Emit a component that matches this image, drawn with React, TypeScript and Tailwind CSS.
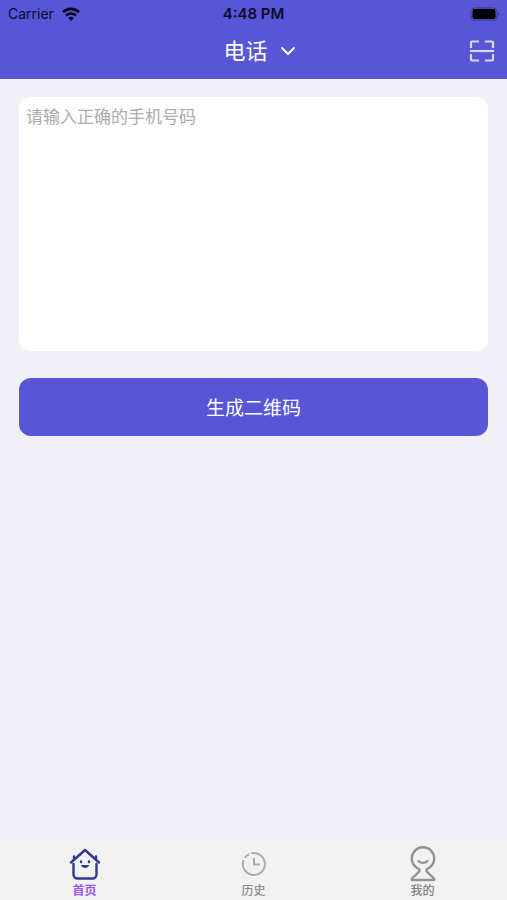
import React, { useState } from "react";

const types = ["电话", "文本", "网址"];

const WifiIcon = () => (
  <svg width="18" height="14" viewBox="0 0 18 14" fill="none" aria-hidden="true">
    <path d="M1 5.2a11.4 11.4 0 0 1 16 0" stroke="#05051c" strokeWidth="2.9" />
    <path d="M4 8.6a7.1 7.1 0 0 1 10 0" stroke="#05051c" strokeWidth="2.5" />
    <path d="M9 14 6.2 11.1a4 4 0 0 1 5.6 0z" fill="#05051c" />
  </svg>
);

const BatteryIcon = () => (
  <svg width="30" height="14" viewBox="0 0 30 14" fill="none" aria-hidden="true">
    <rect x="2" y="1" width="26" height="12" rx="3.5" stroke="#3a378e" />
    <rect x="3.5" y="2" width="23" height="10" rx="2" fill="#000" />
    <path d="M29 5.2c1.4.6 1.4 3 0 3.6z" fill="#3a378e" />
  </svg>
);

const ScanIcon = () => (
  <svg width="26" height="22" viewBox="0 0 26 22" fill="none" stroke="#d9d8fb" strokeWidth="2.2" aria-hidden="true">
    <path d="M2 8V2.5a1 1 0 0 1 1-1h7M16 1.5h7a1 1 0 0 1 1 1V8M24 14v5.5a1 1 0 0 1-1 1h-7M10 20.5H3a1 1 0 0 1-1-1V14" />
    <path d="M1 11h24" />
  </svg>
);

const HomeIcon = () => (
  <svg width="34" height="34" viewBox="0 0 34 34" fill="none" stroke="#2f3b8c" strokeWidth="2.4" strokeLinecap="round" strokeLinejoin="round" aria-hidden="true">
    <path d="M3 15.5 17 3l14 12.5" />
    <path d="M6 11.5V9.5M28 11.5V9.5" />
    <path d="M5.500 17v10.500a4 4 0 0 0 4 4h15a4 4 0 0 0 4-4V17" />
    <path d="M13 14.500v.5M21 14.500v.5" />
    <path d="M13.500 18.500c1.500 2.500 5.500 2.500 7 0z" fill="#2f3b8c" strokeWidth="1.200" />
  </svg>
);

const HistoryIcon = () => (
  <svg width="34" height="34" viewBox="0 0 34 34" fill="none" stroke="#ababab" strokeWidth="2" aria-hidden="true">
    <path d="M14.200 6.400A11 11 0 1 1 6.600 13.200" />
    <path d="M7.800 10.900a11 11 0 0 1 4.200-3.700" />
    <path d="M17 11v6.500h6" />
  </svg>
);

const MineIcon = () => (
  <svg width="34" height="36" viewBox="0 0 34 36" fill="none" stroke="#929292" strokeWidth="2.4" strokeLinecap="round" strokeLinejoin="round" aria-hidden="true">
    <path d="M12 22.500A11.200 11.200 0 1 1 22 22.500c-2 1-2 2.200-.8 3.500l6.800 6.500c.7.700.2 1.500-.5 1.500h-21c-.7 0-1.200-.8-.5-1.500l6.800-6.500c1.200-1.300 1.200-2.500-.8-3.500z" />
    <path d="M12.500 15c2.500 2.500 6.500 2.500 9 0" />
  </svg>
);

const tabs = [
  { name: "首页", Icon: HomeIcon, color: "text-[#9a55ee] font-bold" },
  { name: "历史", Icon: HistoryIcon, color: "text-[#8e8e8e] font-medium" },
  { name: "我的", Icon: MineIcon, color: "text-[#808080] font-medium" },
];

const App: React.FC = () => {
  const [type, setType] = useState("电话");
  const [text, setText] = useState("");

  return (
    <div className="flex flex-col min-h-screen bg-[#f0f0f6] font-['Inter','Noto_Sans_CJK_SC',sans-serif]">
      <header className="bg-[#5856d6]">
        <div className="grid grid-cols-3 items-center h-7 px-2 text-[#0b0a28]">
          <div className="flex items-center gap-2 text-sm">
            <span>Carrier</span>
            <WifiIcon />
          </div>
          <span className="text-center text-[15px] font-semibold">4:48 PM</span>
          <div className="flex justify-end">
            <BatteryIcon />
          </div>
        </div>
        <div className="grid grid-cols-3 items-center h-[51px] px-3 pb-1.5">
          <div />
          <label className="flex items-center justify-center gap-3 pl-3 text-white">
            <select
              aria-label="类型"
              className="appearance-none bg-transparent w-11 text-[22px] leading-8 outline-none"
              value={type}
              onChange={(e) => setType(e.target.value)}
            >
              {types.map((t) => (
                <option key={t} value={t}>
                  {t}
                </option>
              ))}
            </select>
            <svg width="16" height="10" viewBox="0 0 16 10" fill="none" stroke="#fff" strokeWidth="2" strokeLinecap="round" strokeLinejoin="round" aria-hidden="true">
              <path d="m2 2 6 6 6-6" />
            </svg>
          </label>
          <div className="flex justify-end">
            <button aria-label="扫一扫">
              <ScanIcon />
            </button>
          </div>
        </div>
      </header>

      <main className="flex flex-col flex-1 gap-[27px] px-[19px] pt-[18px]">
        <textarea
          aria-label="手机号码"
          className="block w-full h-[254px] px-[7px] py-2 text-[17px] leading-6 bg-white rounded-xl resize-none outline-none placeholder:text-[#ababab]"
          placeholder="请输入正确的手机号码"
          value={text}
          onChange={(e) => setText(e.target.value)}
        />
        <button className="w-full h-[58px] pt-1 text-[19px] text-white bg-[#5856d6] rounded-xl">生成二维码</button>
      </main>

      <nav className="grid grid-cols-3 h-[60px] bg-[#f2f2f2]">
        {tabs.map(({ name, Icon, color }) => (
          <a key={name} href="#" className={`flex flex-col items-center justify-end text-xs ${color}`}>
            <span className="flex items-center h-9">
              <Icon />
            </span>
            <span className="leading-[18px]">{name}</span>
          </a>
        ))}
      </nav>
    </div>
  );
};

export default App;
